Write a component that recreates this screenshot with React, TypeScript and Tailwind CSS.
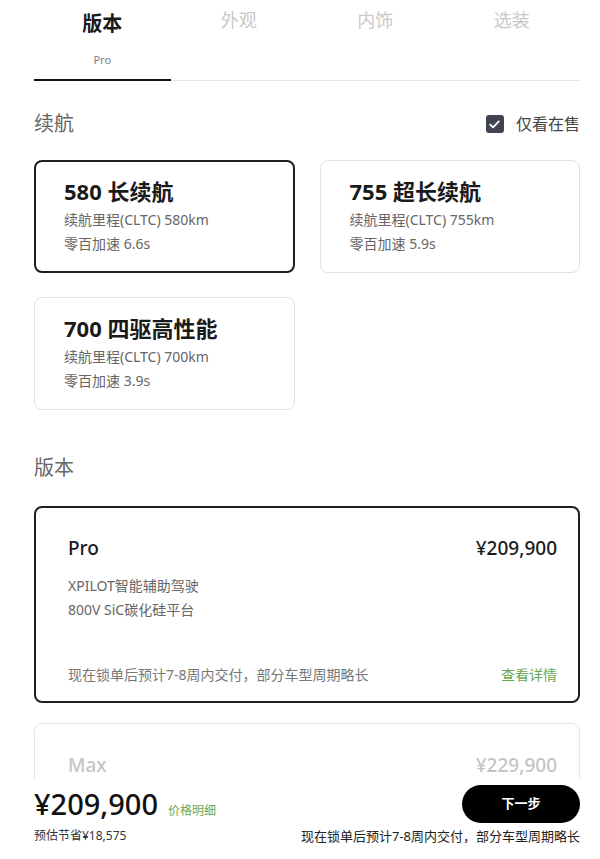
import React, { useState } from "react";

const font = { fontFamily: '"Noto Sans", "Noto Sans CJK SC", sans-serif' };

const ranges = [
  { title: "580 长续航", km: "580km", acc: "6.6s" },
  { title: "755 超长续航", km: "755km", acc: "5.9s" },
  { title: "700 四驱高性能", km: "700km", acc: "3.9s" },
];

const tabs = ["版本", "外观", "内饰", "选装"];

const App: React.FC = () => {
  const [range, setRange] = useState(0);
  const [onSale, setOnSale] = useState(true);

  return (
    <div className="h-screen flex flex-col bg-white text-[#1a1a1a]" style={font}>
      {/* 内容区 */}
      <div className="flex-1 overflow-hidden pl-[34px] pr-[20px]">
        {/* 顶部标签 */}
        <div className="grid grid-cols-4 border-b border-[#e6e6e6]">
          {tabs.map((t, i) =>
            i === 0 ? (
              <div
                key={t}
                className="flex flex-col items-center pt-[8px] pb-[11px] border-b-2 border-[#111] -mb-px"
              >
                <span className="text-[20px] leading-[32px] font-bold">{t}</span>
                <span className="mt-[12px] text-[11px] leading-[16px] text-[#7b7f86]">Pro</span>
              </div>
            ) : (
              <div key={t} className="flex flex-col items-center pt-[8px]">
                <span className="text-[18px] leading-[24px] text-[#c9c9c9]">{t}</span>
              </div>
            )
          )}
        </div>

        {/* 续航 */}
        <div className="mt-[29px] flex items-center justify-between">
          <span className="text-[20px] leading-[28px] text-[#666]">续航</span>
          <button className="flex items-center gap-[12px]" onClick={() => setOnSale(!onSale)}>
            <span
              className={`w-[18px] h-[18px] rounded-[3px] flex items-center justify-center ${
                onSale ? "bg-[#40444f]" : "border border-[#aaa] bg-white"
              }`}
            >
              {onSale && (
                <svg width="11" height="9" viewBox="0 0 11 9" fill="none">
                  <path d="M1.2 4.6 L4.1 7.3 L9.8 1.4" stroke="white" strokeWidth="1.8" strokeLinecap="round" strokeLinejoin="round" />
                </svg>
              )}
            </span>
            <span className="text-[16px] leading-[24px] text-[#444]">仅看在售</span>
          </button>
        </div>

        <div className="mt-[22px] grid grid-cols-2 gap-x-[25px] gap-y-[24px]">
          {ranges.map((r, i) => (
            <div
              key={r.title}
              onClick={() => setRange(i)}
              className={`h-[113px] rounded-[8px] bg-white cursor-pointer ${
                i === range
                  ? "border-2 border-[#1d1f24] pt-[12px] pl-[28px]"
                  : "border border-[#e3e3e3] pt-[13px] pl-[29px]"
              }`}
            >
              <p className="text-[22px] leading-[34px] font-bold text-[#1a1a1a]">{r.title}</p>
              <p className="text-[14px] leading-[24px] text-[#666]">续航里程(CLTC) {r.km}</p>
              <p className="text-[14px] leading-[24px] text-[#666]">零百加速 {r.acc}</p>
            </div>
          ))}
        </div>

        {/* 版本 */}
        <p className="mt-[44px] text-[20px] leading-[28px] text-[#666]">版本</p>

        <div className="mt-[24px] h-[197px] rounded-[8px] border-2 border-[#1d1f24] bg-white pt-[26px] pl-[32px] pr-[21px] pb-[14px] flex flex-col">
          <div className="flex items-center justify-between">
            <span className="text-[19px] leading-[28px] font-medium">Pro</span>
            <span className="text-[19px] leading-[28px] font-medium">¥209,900</span>
          </div>
          <p className="mt-[12px] text-[14px] leading-[24px] text-[#666]">XPILOT智能辅助驾驶</p>
          <p className="text-[14px] leading-[24px] text-[#666]">800V SiC碳化硅平台</p>
          <div className="mt-auto flex items-center justify-between">
            <span className="text-[14px] leading-[24px] text-[#777]">现在锁单后预计7-8周内交付，部分车型周期略长</span>
            <span className="text-[14px] leading-[24px] text-[#6aa84f]">查看详情</span>
          </div>
        </div>

        <div className="mt-[20px] h-[196px] rounded-[8px] border border-[#e6e6e6] bg-white pt-[27px] pl-[33px] pr-[22px]">
          <div className="flex items-center justify-between">
            <span className="text-[19px] leading-[28px] font-medium text-[#c4c4c4]">Max</span>
            <span className="text-[19px] leading-[28px] font-medium text-[#c4c4c4]">¥229,900</span>
          </div>
        </div>
      </div>

      {/* 底部栏 */}
      <div className="h-[80px] shrink-0 bg-white pl-[34px] pr-[20px] pt-[5px] flex justify-between">
        <div className="flex flex-col">
          <div className="h-[40px] flex items-baseline gap-[10px]">
            <span className="text-[29px] leading-[40px] font-medium text-[#111]">¥209,900</span>
            <span className="text-[12px] leading-[16px] text-[#6aa84f]">价格明细</span>
          </div>
          <span className="mt-[2px] text-[12px] leading-[20px] text-[#333]">预估节省¥18,575</span>
        </div>
        <div className="flex flex-col items-end">
          <button className="mt-[1px] w-[118px] h-[38px] rounded-full bg-black text-white text-[13px] font-bold">
            下一步
          </button>
          <span className="mt-[3px] text-[13px] leading-[20px] text-[#222]">
            现在锁单后预计7-8周内交付，部分车型周期略长
          </span>
        </div>
      </div>
    </div>
  );
};

export default App;
